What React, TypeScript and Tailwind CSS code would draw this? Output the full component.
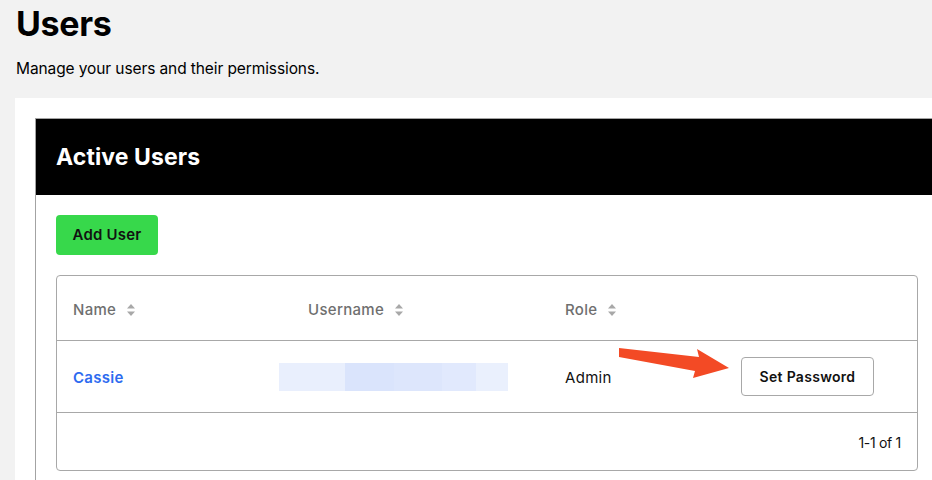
import React from 'react';

function SortIcon() {
  return (
    <svg width="10" height="14" viewBox="0 0 10 14" className="ml-[10px] inline-block">
      <path d="M5 1 L9 5.5 H1 Z" fill="#a8a8a8" />
      <path d="M5 13 L9 8.5 H1 Z" fill="#a8a8a8" />
    </svg>
  );
}

function BlurredUsername() {
  return (
    <div className="flex h-[28px] w-[229px]">
      <div className="w-[66px] bg-[#e9effd]" />
      <div className="w-[49px] bg-[#dae4fc]" />
      <div className="w-[48px] bg-[#dde6fc]" />
      <div className="w-[34px] bg-[#e1e9fd]" />
      <div className="w-[32px] bg-[#eaf0fd]" />
    </div>
  );
}

export default function App() {
  return (
    <div className="relative min-h-screen w-[932px] overflow-hidden bg-[#f2f2f2] pl-4 font-['Inter',sans-serif] text-black">
      <h1 className="pt-[2px] text-[34px] font-bold leading-[44px] tracking-[-0.3px]">Users</h1>
      <p className="mt-[12px] text-[15.5px] leading-[22px] tracking-[-0.1px]">
        Manage your users and their permissions.
      </p>

      <div className="ml-[-1px] mr-[-200px] mt-[18px] bg-white pl-5 pt-5">
        <div className="border-l border-t border-[#a3a3a3]">
          <div className="flex h-[76px] items-center bg-black px-5">
            <h2 className="text-[23px] font-bold tracking-[0.1px] text-white">Active Users</h2>
          </div>

          <div className="px-5 pt-5 pb-6">
            <button className="h-[40px] w-[102px] rounded-[4px] bg-[#37d84b] text-[15px] font-semibold tracking-[0.2px] text-[#111]">
              Add User
            </button>

            <div className="mt-5 w-[862px] rounded-[4px] border border-[#a8a8a8]">
              <div className="flex h-[65px] items-center border-b border-[#a8a8a8] pt-[4px] text-[15px] font-medium tracking-[0.3px] text-[#6f6f6f]">
                <div className="flex w-[251px] items-center pl-[16px]">
                  Name <SortIcon />
                </div>
                <div className="flex w-[257px] items-center">
                  Username <SortIcon />
                </div>
                <div className="flex items-center">
                  Role <SortIcon />
                </div>
              </div>

              <div className="flex h-[72px] items-center border-b border-[#a8a8a8] text-[15px] tracking-[0.3px]">
                <div className="w-[222px] pl-[16px] pt-[3px] font-semibold text-[#2d6bf0]">Cassie</div>
                <div className="w-[286px]">
                  <BlurredUsername />
                </div>
                <div className="w-[176px] pt-[3px] text-[#111]">Admin</div>
                <button className="h-[39px] w-[133px] rounded-[4px] border border-[#a8a8a8] bg-white text-[14px] font-semibold tracking-[0.3px] text-[#111]">
                  Set Password
                </button>
              </div>

              <div className="flex h-[57px] items-center justify-end pr-[16px] pt-[2px] text-[14px] tracking-[-0.3px] text-[#111]">
                1-1 of 1
              </div>
            </div>
          </div>
        </div>
      </div>

      <svg
        className="absolute left-[615px] top-[343px]"
        width="120"
        height="40"
        viewBox="0 0 120 40"
      >
        <path d="M4 5 L84 14 L82 6 L114 25 L78 35 L80 28 L4 14 Z" fill="#f34a25" />
      </svg>
    </div>
  );
}
